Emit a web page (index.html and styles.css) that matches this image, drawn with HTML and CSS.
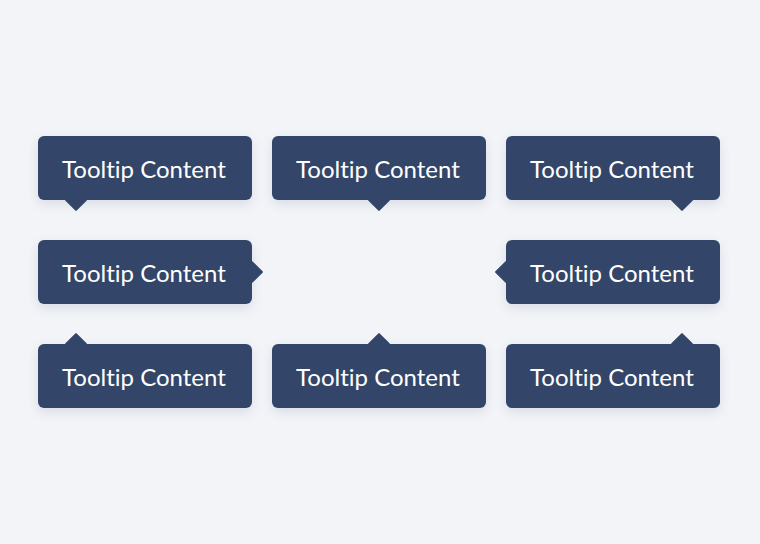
FILE: index.html
```html
<!DOCTYPE html>
<html>
<head>
<meta charset="utf-8">
<link rel="stylesheet" href="styles.css">
</head>
<body>
<div class="stage">
  <div class="grid">
    <div class="tip arrow-bottom-left">Tooltip Content</div>
    <div class="tip arrow-bottom-center">Tooltip Content</div>
    <div class="tip arrow-bottom-right">Tooltip Content</div>
    <div class="tip arrow-right">Tooltip Content</div>
    <div class="empty"></div>
    <div class="tip arrow-left">Tooltip Content</div>
    <div class="tip arrow-top-left">Tooltip Content</div>
    <div class="tip arrow-top-center">Tooltip Content</div>
    <div class="tip arrow-top-right">Tooltip Content</div>
  </div>
</div>
</body>
</html>
```

FILE: styles.css
```css
html, body {
  margin: 0;
  padding: 0;
  background: #f2f4f8;
}
.stage {
  width: 760px;
  height: 544px;
  display: flex;
  align-items: center;
  justify-content: center;
  box-sizing: border-box;
  padding-right: 2px;
}
.grid {
  display: grid;
  grid-template-columns: 214px 214px 214px;
  grid-template-rows: 64px 64px 64px;
  column-gap: 20px;
  row-gap: 40px;
}
.tip {
  position: relative;
  background: #334669;
  color: #ffffff;
  border-radius: 6px;
  font-family: Lato, "Noto Sans", sans-serif;
  font-size: 24px;
  font-variant-ligatures: none;
  font-feature-settings: "liga" 0;
  display: flex;
  align-items: center;
  justify-content: center;
  padding-top: 1px;
  padding-right: 2px;
  box-sizing: border-box;
  box-shadow: 0 4px 12px rgba(40, 55, 90, 0.12);
}
.tip::after {
  content: "";
  position: absolute;
  width: 16px;
  height: 16px;
  background: #334669;
  border-radius: 1px;
  transform: rotate(45deg);
}
.arrow-bottom-left::after { bottom: -8px; left: 30px; }
.arrow-bottom-center::after { bottom: -8px; left: 99px; }
.arrow-bottom-right::after { bottom: -8px; right: 30px; }
.arrow-top-left::after { top: -8px; left: 30px; }
.arrow-top-center::after { top: -8px; left: 99px; }
.arrow-top-right::after { top: -8px; right: 30px; }
.arrow-right::after { right: -8px; top: 24px; }
.arrow-left::after { left: -8px; top: 24px; }
```
